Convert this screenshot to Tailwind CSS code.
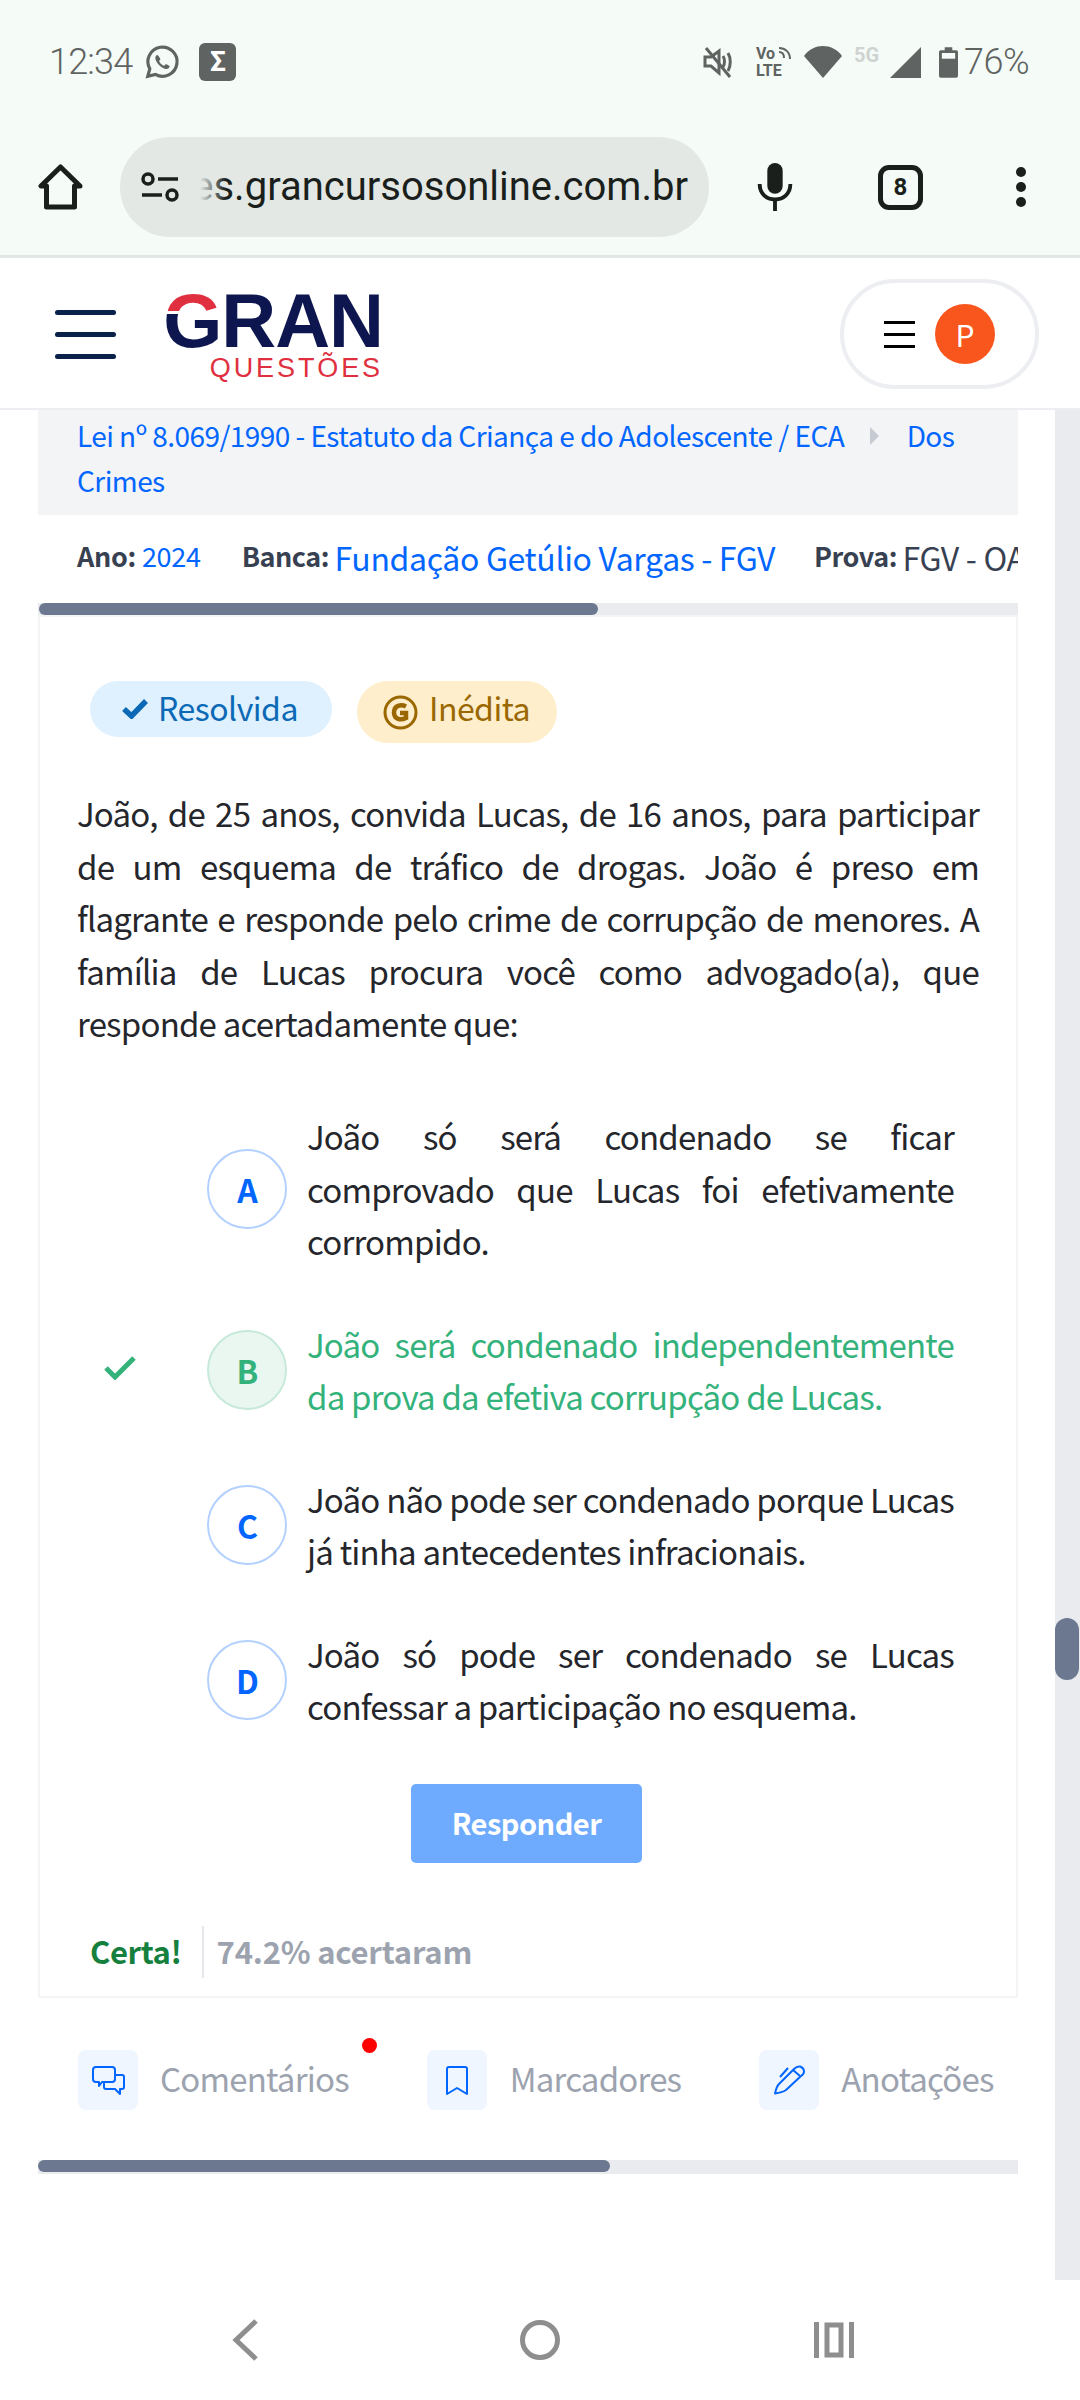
<!DOCTYPE html>
<html lang="pt-BR">
<head>
  <meta charset="UTF-8" />
  <meta name="viewport" content="width=device-width, initial-scale=1.0" />
  <title>Gran Questões</title>
  <script src="https://cdn.jsdelivr.net/npm/@tailwindcss/browser@4"></script>
</head>
<body class="w-[1080px] h-[2400px] overflow-hidden bg-white flex flex-col font-['Noto_Sans_CJK_SC','Noto_Sans',sans-serif]">

  <!-- Android status bar + browser toolbar -->
  <div class="h-[258px] shrink-0 bg-[#f5fbf7] border-b-[3px] border-[#e2e7e4] flex flex-col font-['Roboto',sans-serif]">
    <div class="h-[124px] pl-[49px] pr-[51px] flex items-center justify-between text-[#5f6361]">
      <div class="flex items-center gap-[11px]">
        <span class="text-[36px] font-light tracking-[-0.8px]">12:34</span>
        <svg class="w-[38px] h-[38px]" viewBox="0 0 24 24" fill="none" stroke="#5f6361" stroke-width="2">
          <path d="M3 21l1.300-4.700A9.200 9.200 0 1 1 7.800 19.800L3 21z"/>
          <path fill="#5f6361" stroke="none" d="M9 7.500c-.5 0-1.200.7-1.200 2 0 2.600 3.600 6.400 6.600 6.900 1.300.2 2.300-.6 2.400-1.700 0-.3-2-1.400-2.400-1.300-.4.100-.7 1-1.100 1-.9 0-3-2.100-3.100-3-.1-.4.800-.8.800-1.200 0-.3-1.400-2.700-2-2.700z"/>
        </svg>
        <div class="ml-[7px] w-[37px] h-[38px] rounded-[6px] bg-[#5f6361] text-white text-[28px] font-bold flex items-center justify-center">Σ</div>
      </div>
      <div class="flex items-center">
        <svg class="w-[30px] h-[32px] mr-[23px]" viewBox="0 0 30 32" fill="none" stroke="#5f6361" stroke-width="3">
          <path d="M2 11v9h6l8 7V5l-8 6H2z"/><path d="M20 10c2 3 2 8 0 11M25 7c3 5 3 13 0 18"/><path d="M3 2l24 29"/>
        </svg>
        <div class="relative w-[35px] mr-[13px] flex flex-col text-[16px] leading-[17px] font-bold text-[#5f6361]">
          <span>Vo</span><span>LTE</span>
          <svg class="absolute left-[22px] top-[2px] w-[13px] h-[13px]" viewBox="0 0 13 13" fill="none" stroke="#5f6361" stroke-width="2"><path d="M1 5c3 0 5 2 5 6M1 1c6 0 11 4 11 11"/></svg>
        </div>
        <svg class="w-[38px] h-[32px] mr-[12px]" viewBox="0 0 38 32"><path fill="#5f6361" d="M0 10C5 3 12 0 19 0s14 3 19 10L19 32z"/></svg>
        <div class="w-[29px] mr-[7px] -mt-[14px] text-[20px] font-bold text-[#cfd3d1]">5G</div>
        <svg class="w-[31px] h-[31px] mr-[18px]" viewBox="0 0 32 32"><path fill="#5f6361" d="M32 0v32H0z"/></svg>
        <svg class="w-[19px] h-[31px] mr-[6px]" viewBox="0 0 20 32"><path fill="#5f6361" d="M6 0h8v3h4a2 2 0 0 1 2 2v25a2 2 0 0 1-2 2H2a2 2 0 0 1-2-2V5a2 2 0 0 1 2-2h4z"/><rect x="3" y="6" width="14" height="6" fill="#f5fbf7"/></svg>
        <span class="text-[36px] font-light tracking-[-0.5px]">76%</span>
      </div>
    </div>
    <div class="flex items-center pl-[38px] h-[100px] mt-[13px]">
      <svg class="w-[45px] h-[46px] shrink-0 mr-[37px]" viewBox="0 0 44 46" fill="none" stroke="#1a1f1c" stroke-width="5" stroke-linejoin="round">
        <path d="M22 3L2.500 22H8v21h28V22h5.500z"/>
      </svg>
      <div class="w-[589px] h-[100px] shrink-0 rounded-full bg-[#e3e8e4] flex items-center pl-[21px]">
        <svg class="w-[38px] h-[30px] shrink-0" viewBox="0 0 38 30" fill="none" stroke="#1a1f1c" stroke-width="3.500">
          <circle cx="7" cy="7" r="5"/><path d="M17 7h20M1 23h20"/><circle cx="31" cy="23" r="5"/>
        </svg>
        <div class="relative ml-[21px] w-[488px] overflow-hidden flex justify-end">
          <span class="shrink-0 text-[40px] text-[#1a1f1c] whitespace-nowrap">es.grancursosonline.com.br</span>
          <div class="absolute left-0 top-0 w-[26px] h-full bg-linear-to-r from-[#e3e8e4] to-[#e3e8e4]/0"></div>
        </div>
      </div>
      <svg class="w-[36px] h-[48px] ml-[48px]" viewBox="0 0 36 50">
        <rect x="10" y="0" width="16" height="32" rx="8" fill="#1a1f1c"/>
        <path d="M2 22c0 10 7 16 16 16s16-6 16-16M18 38v12" fill="none" stroke="#1a1f1c" stroke-width="4"/>
      </svg>
      <div class="w-[45px] h-[45px] ml-[85px] rounded-[11px] border-[5px] border-[#1a1f1c] flex items-center justify-center text-[24px] font-bold text-[#1a1f1c]">8</div>
      <div class="ml-[93px] flex flex-col gap-[5px]">
        <div class="w-[10px] h-[10px] rounded-full bg-[#1a1f1c]"></div>
        <div class="w-[10px] h-[10px] rounded-full bg-[#1a1f1c]"></div>
        <div class="w-[10px] h-[10px] rounded-full bg-[#1a1f1c]"></div>
      </div>
    </div>
  </div>

  <!-- Site header -->
  <header class="h-[152px] shrink-0 bg-white border-b-[2px] border-[#eceef1] flex items-center justify-between pt-[2px] pl-[55px] pr-[41px]">
    <div class="flex items-center">
      <div class="w-[61px] flex flex-col gap-[17px]">
        <div class="h-[5px] rounded-sm bg-[#0a2149]"></div>
        <div class="h-[5px] rounded-sm bg-[#0a2149]"></div>
        <div class="h-[5px] rounded-sm bg-[#0a2149]"></div>
      </div>
      <div class="ml-[53px] mt-[5px] w-[214px] flex flex-col items-end font-['Liberation_Sans',sans-serif]">
        <div class="text-[76px] leading-[60px] font-bold tracking-[-1px] text-[#0d164f]"><span class="bg-[linear-gradient(180deg,#e03040_39%,transparent_39%,transparent_42%,#0d164f_42%)] bg-clip-text [-webkit-text-fill-color:transparent]">G</span>RAN</div>
        <div class="text-[27px] leading-[28px] mt-[3px] text-[#e03040] tracking-[2.900px]">QUESTÕES</div>
      </div>
    </div>
    <div class="w-[199px] h-[110px] rounded-full border-[4px] border-[#eceef2] flex items-center pl-[40px]">
      <div class="w-[31px] flex flex-col gap-[9px]">
        <div class="h-[3px] bg-black"></div>
        <div class="h-[3px] bg-black"></div>
        <div class="h-[3px] bg-black"></div>
      </div>
      <div class="ml-[20px] w-[60px] h-[60px] rounded-full bg-[#f9561e] text-white text-[30px] flex items-center justify-center">P</div>
    </div>
  </header>

  <!-- Page body with the page scrollbar on the right -->
  <div class="flex-1 relative">
    <div class="absolute right-0 top-0 w-[25px] h-[1870px] bg-[#e9ebef]">
      <div class="absolute top-[1208px] left-0 w-[24px] h-[62px] rounded-full bg-[#6b7890]"></div>
    </div>

    <main class="ml-[38px] w-[980px] flex flex-col">
      <div class="h-[105px] bg-[#f3f4f6] pl-[39px] pr-[40px] pt-[3px] text-[28px] tracking-[-0.55px] leading-[45px] text-[#0066ff]">
        Lei nº 8.069/1990 - Estatuto da Criança e do Adolescente / ECA
        <span class="inline-block w-0 h-0 ml-[20px] mr-[22px] border-y-[9px] border-y-transparent border-l-[9px] border-l-[#c5cad3] align-[2px]"></span>
        Dos Crimes
      </div>

      <div class="h-[88px] pl-[39px] pb-[5px] flex items-center whitespace-nowrap overflow-hidden text-[#374151]">
        <span class="text-[27px] font-bold tracking-[-0.3px]">Ano:&nbsp;</span><span class="text-[27px] tracking-[-0.3px] text-[#0066ff]">2024</span>
        <span class="ml-[41px] text-[27px] font-bold tracking-[-0.5px]">Banca:&nbsp;</span><span class="text-[32px] tracking-[-0.35px] text-[#0066ff]">Fundação Getúlio Vargas - FGV</span>
        <span class="ml-[39px] text-[27px] font-bold tracking-[-0.5px]">Prova:&nbsp;</span><span class="text-[32px] tracking-[-0.3px]">FGV - OAB</span>
      </div>
      <div class="h-[12px] bg-[#e9ebef]"><div class="ml-[1px] w-[559px] h-[12px] rounded-full bg-[#6b7890]"></div></div>

      <!-- Question card -->
      <section class="h-[1383px] border-2 border-[#f3f4f6] flex flex-col">
        <div class="flex items-start gap-[25px] pl-[50px] pt-[64px]">
          <div class="w-[242px] h-[56px] rounded-full bg-[#dff1fe] text-[#0b69b5] text-[32px] tracking-[-0.5px] flex items-center pl-[32px]">
            <svg class="w-[26px] h-[20px] mr-[10px]" viewBox="0 0 26 20" fill="none" stroke="#0b69b5" stroke-width="5.500"><path d="M2 10l7.500 7L24 2"/></svg>
            <span class="-mt-[4px]">Resolvida</span>
          </div>
          <div class="w-[200px] h-[62px] rounded-full bg-[#feeecb] text-[#9a6700] text-[32px] tracking-[-0.5px] flex items-center pl-[26px]">
            <svg class="w-[35px] h-[35px] mr-[11px] shrink-0" viewBox="0 0 35 35" fill="none" stroke="#9a6700"><circle cx="17.500" cy="17.500" r="15.500" stroke-width="3"/><path stroke-width="4.500" d="M23 11.500c-5-2.500-12-1-12 6s7 8 12 5.500v-5h-6"/></svg>
            <span class="-mt-[10px]">Inédita</span>
          </div>
        </div>

        <p class="ml-[37px] mr-[37px] mt-[44px] text-[33px] tracking-[-0.8px] leading-[52.500px] text-[#24262b] text-justify">João, de 25 anos, convida Lucas, de 16 anos, para participar de um esquema de tráfico de drogas. João é preso em flagrante e responde pelo crime de corrupção de menores. A família de Lucas procura você como advogado(a), que responde acertadamente que:</p>

        <div class="flex flex-col mt-[60px] pl-[167px] pr-[62px] text-[33px] tracking-[-0.8px] leading-[52.500px] text-[#24262b] text-justify">
          <div class="flex items-center h-[159px]">
            <div class="w-[80px] h-[80px] shrink-0 rounded-full border-2 border-[#b3d0ff] text-[#0066ff] text-[32px] font-bold flex items-center justify-center">A</div>
            <p class="ml-[20px]">João só será condenado se ficar comprovado que Lucas foi efetivamente corrompido.</p>
          </div>
          <div class="relative flex items-center h-[105px] mt-[49px] text-[#34b27b]">
            <svg class="absolute left-[-103px] top-[37px] w-[32px] h-[25px]" viewBox="0 0 32 25" fill="none" stroke="#34b27b" stroke-width="5"><path d="M2 13l9 9L30 3"/></svg>
            <div class="w-[80px] h-[80px] shrink-0 rounded-full border-2 border-[#c6e9d9] bg-[#eaf7f1] text-[32px] font-bold flex items-center justify-center">B</div>
            <p class="ml-[20px]">João será condenado independentemente da prova da efetiva corrupção de Lucas.</p>
          </div>
          <div class="flex items-center h-[105px] mt-[50px]">
            <div class="w-[80px] h-[80px] shrink-0 rounded-full border-2 border-[#b3d0ff] text-[#0066ff] text-[32px] font-bold flex items-center justify-center">C</div>
            <p class="ml-[20px]">João não pode ser condenado porque Lucas já tinha antecedentes infracionais.</p>
          </div>
          <div class="flex items-center h-[105px] mt-[50px]">
            <div class="w-[80px] h-[80px] shrink-0 rounded-full border-2 border-[#b3d0ff] text-[#0066ff] text-[32px] font-bold flex items-center justify-center">D</div>
            <p class="ml-[20px]">João só pode ser condenado se Lucas confessar a participação no esquema.</p>
          </div>
        </div>

        <button class="self-center mt-[51px] ml-[-3px] w-[231px] h-[79px] rounded-[5px] bg-[#6eabff] text-white text-[29px] tracking-[-0.5px] font-bold">Responder</button>

        <div class="flex items-center mt-[63px] pl-[50px]">
          <span class="text-[31px] font-bold tracking-[-0.4px] text-[#15803d]">Certa!</span>
          <div class="w-[2px] h-[52px] bg-[#e5e7eb] ml-[20px] mr-[13px]"></div>
          <span class="text-[31px] font-bold tracking-[-0.2px] text-[#9ca3af]">74.2% acertaram</span>
        </div>
      </section>

      <!-- Tabs -->
      <div class="flex items-center h-[60px] mt-[52px] pl-[40px] text-[33px] tracking-[-0.8px] text-[#9ca3af]">
        <div class="relative flex items-center">
          <div class="w-[60px] h-[60px] rounded-[8px] bg-[#eff6ff] flex items-center justify-center">
            <svg class="w-[33px] h-[29px]" viewBox="0 0 33 29" fill="none" stroke="#0066ff" stroke-width="2" stroke-linejoin="round">
              <path d="M4 1h16a3 3 0 0 1 3 3v9a3 3 0 0 1-3 3H10l-3 4v-4H4a3 3 0 0 1-3-3V4a3 3 0 0 1 3-3z"/>
              <path d="M23 9h7a2 2 0 0 1 2 2v10a2 2 0 0 1-2 2h-2v5l-5-5h-9a2 2 0 0 1-2-2v-5"/>
            </svg>
          </div>
          <span class="ml-[22px] -mt-[2px]">Comentários</span>
          <div class="absolute right-[-28px] top-[-12px] w-[15px] h-[15px] rounded-full bg-[#ff0000]"></div>
        </div>
        <div class="flex items-center ml-[78px]">
          <div class="w-[60px] h-[60px] rounded-[8px] bg-[#eff6ff] flex items-center justify-center">
            <svg class="w-[22px] h-[29px]" viewBox="0 0 22 29" fill="none" stroke="#0066ff" stroke-width="2" stroke-linejoin="round"><path d="M3 1h16a2 2 0 0 1 2 2v25l-10-6-10 6V3a2 2 0 0 1 2-2z"/></svg>
          </div>
          <span class="ml-[23px] -mt-[2px]">Marcadores</span>
        </div>
        <div class="flex items-center ml-[78px]">
          <div class="w-[60px] h-[60px] rounded-[8px] bg-[#eff6ff] flex items-center justify-center">
            <svg class="w-[31px] h-[30px]" viewBox="0 0 31 30" fill="none" stroke="#0066ff" stroke-width="2" stroke-linejoin="round">
              <path d="M1 28.500C2 24 3 21 5 19L20 4Q23 1 26 1.500Q30 3 30 6.500Q30 9 27 11L12 25C9 27 5 28 1 28.500z"/><path d="M19 5l7 6M6 12L14 3"/>
            </svg>
          </div>
          <span class="ml-[22px] -mt-[2px]">Anotações</span>
        </div>
      </div>
      <div class="h-[14px] mt-[50px] bg-[#e9ebef]"><div class="w-[572px] h-[12px] rounded-full bg-[#6b7890]"></div></div>
    </main>
  </div>

  <!-- Android nav bar -->
  <nav class="absolute left-0 top-[2280px] w-[1080px] h-[120px] bg-white">
    <svg class="absolute left-[230px] top-[38px] w-[32px] h-[44px]" viewBox="0 0 32 44" fill="none" stroke="#8e8e8e" stroke-width="5"><path d="M26 3L6 22l20 19"/></svg>
    <div class="absolute left-[520px] top-[40px] w-[40px] h-[40px] rounded-full border-[5px] border-[#8e8e8e]"></div>
    <svg class="absolute left-[814px] top-[42px] w-[40px] h-[36px]" viewBox="0 0 40 36" fill="none" stroke="#8e8e8e" stroke-width="5"><path d="M2.500 0v36M37.500 0v36"/><rect x="13" y="3" width="14" height="30"/></svg>
  </nav>
</body>
</html>
